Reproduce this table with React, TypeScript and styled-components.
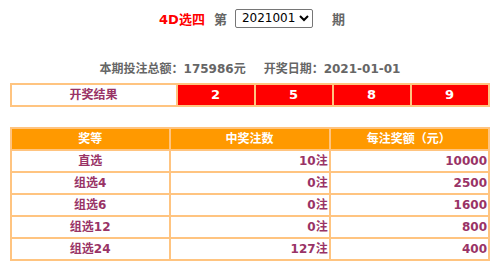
import React, { useState } from 'react';
import styled, { createGlobalStyle } from 'styled-components';

const GlobalStyle = createGlobalStyle`
  body {
    margin: 0;
    background: #fff;
    font-family: "DejaVu Sans", "Noto Sans CJK SC", sans-serif;
  }
`;

const Page = styled.div`
  width: 500px;
  padding: 0 10px;
  box-sizing: border-box;
`;

const TitleBar = styled.div`
  display: flex;
  align-items: center;
  justify-content: center;
  height: 18px;
  padding-top: 9px;
  padding-left: 4px;
  font-size: 13px;
  font-weight: bold;
  color: #666;
`;

const GameName = styled.span`
  color: #ff0000;
  margin-right: 9px;
`;

const IssueSelect = styled.select`
  height: 19px;
  width: 78px;
  margin: 0 19px 0 8px;
  padding: 0 0 0 2px;
  font-family: "DejaVu Sans", sans-serif;
  font-size: 12px;
  color: #000;
  border: 1px solid #767676;
  border-radius: 2px;
  background: #fff;
`;

const Summary = styled.div`
  display: flex;
  justify-content: center;
  gap: 18px;
  margin-top: 33px;
  height: 18px;
  line-height: 18px;
  font-size: 12px;
  font-weight: bold;
  color: #666;
`;

const Grid = styled.table<{ $top: number }>`
  width: 480px;
  margin-top: ${({ $top }) => $top}px;
  border-spacing: 2px;
  background: #ffc480;
  table-layout: fixed;
  font-size: 12px;
  font-weight: bold;
`;

const Cell = styled.td<{ $tone?: 'red' | 'head'; $align?: 'center' | 'right'; $big?: boolean }>`
  height: 20px;
  padding: 0 1px 0 0;
  line-height: 20px;
  text-align: ${({ $align }) => $align || 'center'};
  font-size: ${({ $big }) => ($big ? '13px' : '12px')};
  background: ${({ $tone }) =>
    $tone === 'red' ? '#ff0000' : $tone === 'head' ? '#ff9900' : '#fff'};
  color: ${({ $tone }) => ($tone ? '#fff' : '#993366')};
  white-space: nowrap;
`;

const prizes = [
  { name: '直选', count: 10, amount: 10000 },
  { name: '组选4', count: 0, amount: 2500 },
  { name: '组选6', count: 0, amount: 1600 },
  { name: '组选12', count: 0, amount: 800 },
  { name: '组选24', count: 127, amount: 400 },
];

const balls = [2, 5, 8, 9];

const App: React.FC = () => {
  const [issue, setIssue] = useState('2021001');

  return (
    <Page>
      <GlobalStyle />
      <TitleBar>
        <GameName>4D选四</GameName>
        <span>第</span>
        <IssueSelect value={issue} onChange={(e) => setIssue(e.target.value)}>
          <option value="2021001">2021001</option>
        </IssueSelect>
        <span>期</span>
      </TitleBar>

      <Summary>
        <span>本期投注总额：175986元</span>
        <span>开奖日期：2021-01-01</span>
      </Summary>

      <Grid $top={5}>
        <colgroup>
          <col style={{ width: 164 }} />
          <col />
          <col />
          <col />
          <col />
        </colgroup>
        <tbody>
          <tr>
            <Cell>开奖结果</Cell>
            {balls.map((b, i) => (
              <Cell key={i} $tone="red" $big>{b}</Cell>
            ))}
          </tr>
        </tbody>
      </Grid>

      <Grid $top={20}>
        <thead>
          <tr>
            <Cell as="th" $tone="head">奖等</Cell>
            <Cell as="th" $tone="head">中奖注数</Cell>
            <Cell as="th" $tone="head">每注奖额（元）</Cell>
          </tr>
        </thead>
        <tbody>
          {prizes.map((p) => (
            <tr key={p.name}>
              <Cell>{p.name}</Cell>
              <Cell $align="right">{p.count}注</Cell>
              <Cell $align="right">{p.amount}</Cell>
            </tr>
          ))}
        </tbody>
      </Grid>
    </Page>
  );
};

export default App;
